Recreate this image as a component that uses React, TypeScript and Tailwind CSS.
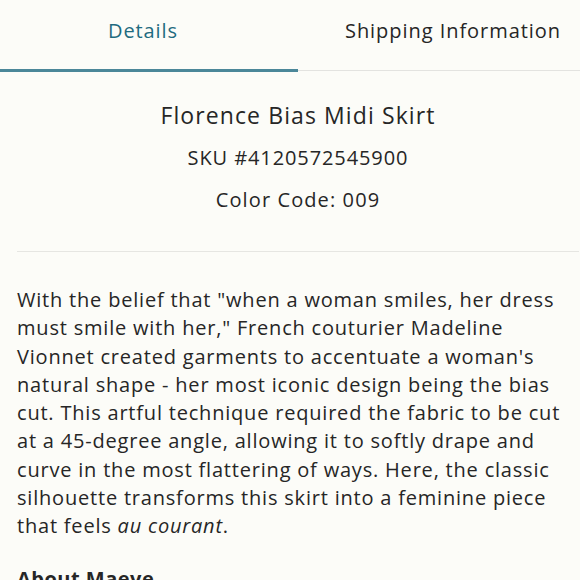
import React from "react";

export default function App() {
  return (
    <div className="w-full h-[580px] overflow-hidden bg-[#fcfcf8] text-[#262626]" style={{ fontFamily: "'Open Sans', sans-serif" }}>
      <div className="w-[596px]">
        <div className="flex h-[72px]">
          <div className="w-[298px] shrink-0 relative flex items-center justify-center pr-[12px] pb-[10px]">
            <span className="text-[20px] text-[#1f6b80] tracking-[0.9px]">Details</span>
            <div className="absolute left-0 right-0 bottom-0 h-[3px] bg-[#4b8799]" />
          </div>
          <div className="w-[310px] shrink-0 relative flex items-center justify-center pb-[10px]">
            <span className="text-[20px] tracking-[0.95px]">Shipping Information</span>
            <div className="absolute left-0 right-0 bottom-[1px] h-[1px] bg-[#e3e3e0]" />
          </div>
        </div>
        <div className="px-[17px]">
          <div className="flex flex-col items-center pt-[28px] pb-[37px] border-b border-[#e6e6e2]">
            <div className="text-[23px] leading-[30px] tracking-[1.1px]">Florence Bias Midi Skirt</div>
            <div className="text-[20px] leading-[28px] mt-[14px] tracking-[0.9px]">SKU #4120572545900</div>
            <div className="text-[20px] leading-[28px] mt-[14px] tracking-[1.1px]">Color Code: 009</div>
          </div>
          <p className="text-[20px] leading-[28.3px] mt-[34px] tracking-[0.8px]">
            With the belief that "when a woman smiles, her dress must smile with her," French couturier Madeline Vionnet created garments to accentuate a woman's natural shape - her most iconic design being the bias cut. This artful technique required the fabric to be cut at a 45-degree angle, allowing it to softly drape and curve in the most flattering of ways. Here, the classic silhouette transforms this skirt into a feminine piece that feels <em>au courant</em>.
          </p>
          <div className="text-[20px] font-bold mt-[24px] leading-[28px] tracking-[0.5px]">About Maeve</div>
        </div>
      </div>
    </div>
  );
}
